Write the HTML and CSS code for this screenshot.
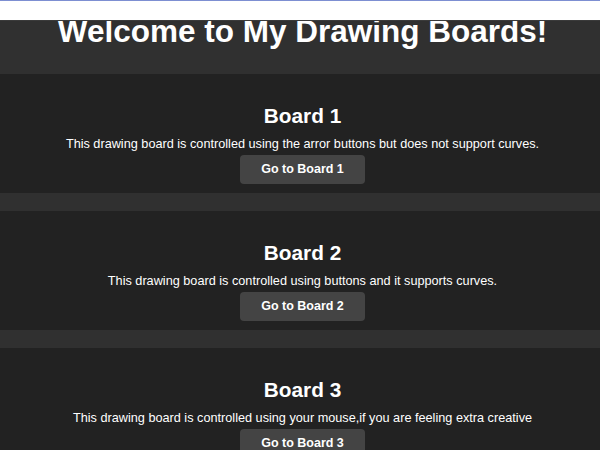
FILE: index.html
```html
<!DOCTYPE html>
<html>
<head>
<meta charset="utf-8">
<link rel="stylesheet" href="styles.css">
</head>
<body>
<div class="topbar"></div>
<header class="header">
  <h1>Welcome to My Drawing Boards!</h1>
</header>
<main class="boards">
  <section class="card">
    <h2>Board 1</h2>
    <p>This drawing board is controlled using the arror buttons but does not support curves.</p>
    <button class="btn">Go to Board 1</button>
  </section>
  <section class="card">
    <h2>Board 2</h2>
    <p>This drawing board is controlled using buttons and it supports curves.</p>
    <button class="btn">Go to Board 2</button>
  </section>
  <section class="card">
    <h2>Board 3</h2>
    <p>This drawing board is controlled using your mouse,if you are feeling extra creative</p>
    <button class="btn">Go to Board 3</button>
  </section>
</main>
</body>
</html>
```
FILE: styles.css
```css
html, body {
  margin: 0;
  padding: 0;
}
body {
  background: #303030;
  font-family: "Liberation Sans", Arial, sans-serif;
  color: #fff;
}
.topbar {
  position: absolute;
  top: 0;
  left: 0;
  right: 0;
  height: 19px;
  background: #fff;
  border-top: 1px solid #7d8fd2;
  border-bottom: 1px solid #3a3a3a;
  z-index: 2;
}
.header {
  height: 74px;
  box-sizing: border-box;
  padding: 13px 0 0 5px;
  background: #303030;
  text-align: center;
}
.header h1 {
  margin: 0;
  font-size: 31.5px;
  line-height: 36px;
  font-weight: bold;
}
.boards {
  display: flex;
  flex-direction: column;
  gap: 18px;
}
.card {
  background: #222;
  text-align: center;
  padding: 30px 0 9px 5px;
  display: flex;
  flex-direction: column;
  align-items: center;
}
.card h2 {
  margin: 0;
  font-size: 20.8px;
  line-height: 24px;
  font-weight: bold;
}
.card p {
  margin: 8px 0 3px;
  font-size: 12.7px;
  line-height: 16px;
}
.btn {
  font-family: "Liberation Sans", Arial, sans-serif;
  font-size: 12.5px;
  font-weight: bold;
  line-height: 15px;
  color: #fff;
  background: #444;
  border: none;
  border-radius: 4px;
  padding: 7px 21px;
}
```
